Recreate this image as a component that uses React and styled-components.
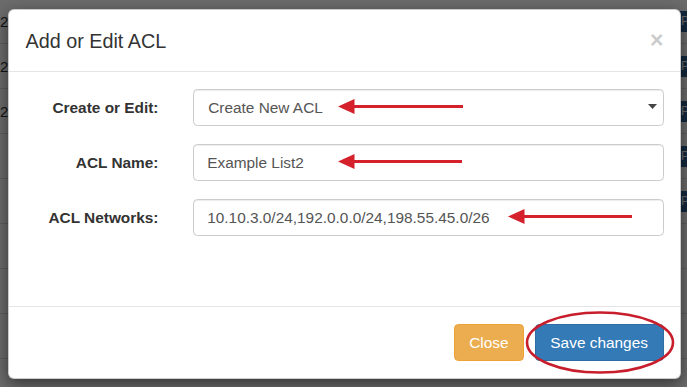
import React from 'react'
import styled, { createGlobalStyle } from 'styled-components'

const GlobalStyle = createGlobalStyle`
  html, body {
    margin: 0;
    padding: 0;
    width: 687px;
    height: 387px;
    overflow: hidden;
    font-family: "Liberation Sans", Arial, sans-serif;
  }
`

const Page = styled.div`
  position: relative;
  width: 687px;
  height: 387px;
  background: #fff;
  overflow: hidden;
`

const Table = styled.div`
  display: flex;
  flex-direction: column;
  margin-top: -1px;
`

const TableRow = styled.div`
  display: grid;
  grid-template-columns: 90px 1fr auto;
  align-items: center;
  height: 44px;
  border-bottom: 1px solid #ddd;
  font-size: 15px;
  color: #333;
`

const RowBadge = styled.span`
  width: 40px;
  height: 21px;
  margin-right: -34px;
  background: ${p => (p.$show ? '#2f5f92' : 'transparent')};
  color: #fff;
  font-size: 12px;
  line-height: 21px;
  padding-left: 2px;
`

const Backdrop = styled.div`
  position: absolute;
  inset: 0;
  background: rgba(0, 0, 0, 0.58);
  display: flex;
  align-items: flex-start;
  padding: 9px 0 0 8px;
`

const Dialog = styled.div`
  width: 673px;
  box-sizing: border-box;
  background: #fff;
  border: 1px solid rgba(0, 0, 0, 0.2);
  border-radius: 6px;
  box-shadow: 0 5px 15px rgba(0, 0, 0, 0.5);
`

const Header = styled.div`
  display: flex;
  align-items: flex-start;
  justify-content: space-between;
  padding: 16.5px;
  border-bottom: 1px solid #e5e5e5;
`

const Title = styled.h4`
  margin: 0;
  font-size: 19.8px;
  font-weight: normal;
  line-height: 28.3px;
  color: #333;
`

const CloseX = styled.button`
  margin-top: 2px;
  padding: 0;
  border: 0;
  background: transparent;
  font-family: "Liberation Sans", Arial, sans-serif;
  font-size: 23px;
  font-weight: bold;
  line-height: 1;
  color: #000;
  opacity: 0.2;
  cursor: pointer;
`

const Body = styled.div`
  display: flex;
  flex-direction: column;
  gap: 17.5px;
  padding: 16.5px 16.5px 70px;
`

const FormRow = styled.div`
  display: grid;
  grid-template-columns: 133px 1fr;
  column-gap: 34.5px;
  align-items: center;
`

const Label = styled.label`
  text-align: right;
  font-size: 15.4px;
  font-weight: bold;
  color: #333;
`

const Field = styled.div`
  position: relative;
`

const Input = styled.input`
  display: block;
  width: 100%;
  height: 37.5px;
  box-sizing: border-box;
  padding: 6.6px 13.2px;
  border: 1px solid #ccc;
  border-radius: 4.4px;
  box-shadow: inset 0 1px 1px rgba(0, 0, 0, 0.075);
  font-family: "Liberation Sans", Arial, sans-serif;
  font-size: 15.4px;
  color: #555;
  background: #fff;
  outline: none;
`

const SelectBox = styled.div`
  display: flex;
  align-items: center;
  justify-content: space-between;
  height: 37.5px;
  box-sizing: border-box;
  padding: 0 6px 0 14.2px;
  border: 1px solid #ccc;
  border-radius: 4.4px;
  box-shadow: inset 0 1px 1px rgba(0, 0, 0, 0.075);
  font-size: 15.4px;
  color: #555;
`

const Caret = styled.svg`
  width: 9px;
  height: 5px;
  margin-top: -2px;
`

const Pointer = styled.svg`
  position: absolute;
  top: 9px;
  left: ${p => p.$left}px;
  width: ${p => p.$length}px;
  height: 17px;
  pointer-events: none;
`

const Footer = styled.div`
  display: flex;
  justify-content: flex-end;
  gap: 11px;
  padding: 16.5px;
  border-top: 1px solid #e5e5e5;
`

const Button = styled.button`
  height: 37.5px;
  padding: 0 ${p => (p.$variant === 'primary' ? 14.6 : 14.2)}px;
  border: 1px solid ${p => (p.$variant === 'primary' ? '#2e6da4' : '#eea236')};
  border-radius: 4.4px;
  background: ${p => (p.$variant === 'primary' ? '#337ab7' : '#ebad4f')};
  color: #fff;
  font-family: "Liberation Sans", Arial, sans-serif;
  font-size: 15.4px;
  cursor: pointer;
`

const SaveWrap = styled.div`
  position: relative;
  display: flex;
`

const Ring = styled.svg`
  position: absolute;
  left: -10px;
  top: -13px;
  width: 150px;
  height: 63px;
  pointer-events: none;
`

const RED = '#d4212b'

const Arrow = ({ left, length }) => (
  <Pointer $left={left} $length={length} viewBox={`0 0 ${length} 17`}>
    <line x1="14" y1="8.5" x2={length} y2="8.5" stroke={RED} strokeWidth="3" />
    <polygon points="0,8.5 16.5,1 16.5,16" fill={RED} />
  </Pointer>
)

const rows = [
  { label: 'Create or Edit:', value: 'Create New ACL', select: true, arrow: { left: 145, length: 125 } },
  { label: 'ACL Name:', value: 'Example List2', arrow: { left: 145, length: 124 } },
  { label: 'ACL Networks:', value: '10.10.3.0/24,192.0.0.0/24,198.55.45.0/26', arrow: { left: 315, length: 124 } },
]

const tableRows = [
  { date: '2018-04-10', name: 'Example List1' },
  { date: '2018-04-11', name: 'Office Networks' },
  { date: '2018-04-12', name: 'Guest Networks' },
  { date: '', name: 'Lab Subnets' },
  { date: '', name: 'VPN Pool' },
  { date: '', name: 'DMZ Hosts' },
  { date: '', name: 'Branch Sites' },
  { date: '', name: 'Printers' },
  { date: '', name: '' },
]

const App = () => (
  <Page>
    <GlobalStyle />
    <Table>
      {tableRows.map((r, i) => (
        <TableRow key={i}>
          <span>{r.date}</span>
          <span>{r.name}</span>
          <RowBadge $show={i < 5}>{i < 5 ? 'Pu' : ''}</RowBadge>
        </TableRow>
      ))}
    </Table>
    <Backdrop>
      <Dialog>
        <Header>
          <Title>Add or Edit ACL</Title>
          <CloseX aria-label="Close">×</CloseX>
        </Header>
        <Body>
          {rows.map(row => (
            <FormRow key={row.label}>
              <Label>{row.label}</Label>
              <Field>
                {row.select ? (
                  <SelectBox>
                    <span>{row.value}</span>
                    <Caret viewBox="0 0 9 5">
                      <polygon points="0,0 9,0 4.5,5" fill="#444" />
                    </Caret>
                  </SelectBox>
                ) : (
                  <Input readOnly value={row.value} />
                )}
                <Arrow {...row.arrow} />
              </Field>
            </FormRow>
          ))}
        </Body>
        <Footer>
          <Button>Close</Button>
          <SaveWrap>
            <Button $variant="primary">Save changes</Button>
            <Ring viewBox="0 0 150 63">
              <ellipse cx="75" cy="31.5" rx="73" ry="30" fill="none" stroke="#c81e2c" strokeWidth="2.6" />
            </Ring>
          </SaveWrap>
        </Footer>
      </Dialog>
    </Backdrop>
  </Page>
)

export default App
